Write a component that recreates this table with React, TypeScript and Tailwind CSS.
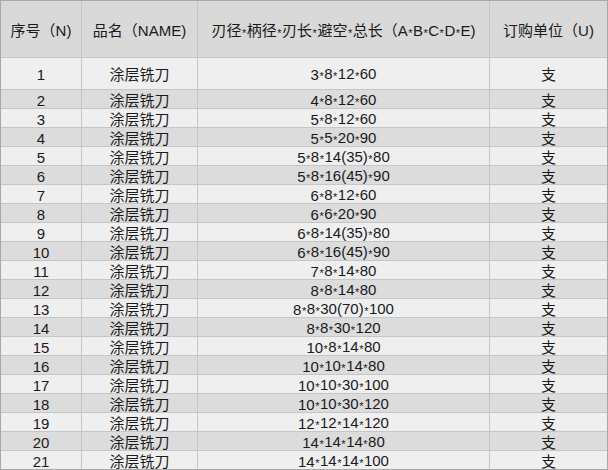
const rows: [string, string][] = [
  ['1', '3*8*12*60'],
  ['2', '4*8*12*60'],
  ['3', '5*8*12*60'],
  ['4', '5*5*20*90'],
  ['5', '5*8*14(35)*80'],
  ['6', '5*8*16(45)*90'],
  ['7', '6*8*12*60'],
  ['8', '6*6*20*90'],
  ['9', '6*8*14(35)*80'],
  ['10', '6*8*16(45)*90'],
  ['11', '7*8*14*80'],
  ['12', '8*8*14*80'],
  ['13', '8*8*30(70)*100'],
  ['14', '8*8*30*120'],
  ['15', '10*8*14*80'],
  ['16', '10*10*14*80'],
  ['17', '10*10*30*100'],
  ['18', '10*10*30*120'],
  ['19', '12*12*14*120'],
  ['20', '14*14*14*80'],
  ['21', '14*14*14*100'],
];

const headers = ['序号（N)', '品名（NAME)', '刃径*柄径*刃长*避空*总长（A*B*C*D*E)', '订购单位（U)'];

// small, centred asterisk like the sheet's font
function Cell({ text }: { text: string }) {
  const parts = text.split('*');
  return (
    <>
      {parts.map((p, i) => (
        <span key={i}>
          {i > 0 && <span className="relative top-px px-[0.5px] text-[11px]">*</span>}
          {p}
        </span>
      ))}
    </>
  );
}

export default function App() {
  return (
    <div className="h-[470px] w-[608px] overflow-hidden bg-white font-['Liberation_Sans','Noto_Sans_CJK_SC',sans-serif] text-[15px] text-[#1a1a1a]">
      <div className="border border-[#a8a8a8]">
        <div className="grid grid-cols-[80px_115px_291px_117px] gap-px bg-[#c6c6c6]">
          {headers.map((h) => (
            <div key={h} className="flex h-[56px] items-center justify-center bg-[#d9d9d9] pt-[4px] leading-[18px] whitespace-nowrap">
              <Cell text={h} />
            </div>
          ))}
          {rows.map(([n, size], i) => {
            const bg = i % 2 === 0 ? 'bg-[#efefef]' : 'bg-[#dcdcdc]';
            const h = i === 0 ? 'h-[31px] pt-[2px]' : 'h-[18px] pt-[3px]';
            return [n, '涂层铣刀', size, '支'].map((c, j) => (
              <div key={`${n}-${j}`} className={`flex items-center justify-center leading-[18px] whitespace-nowrap ${bg} ${h}`}>
                <Cell text={c} />
              </div>
            ));
          })}
        </div>
      </div>
    </div>
  );
}
